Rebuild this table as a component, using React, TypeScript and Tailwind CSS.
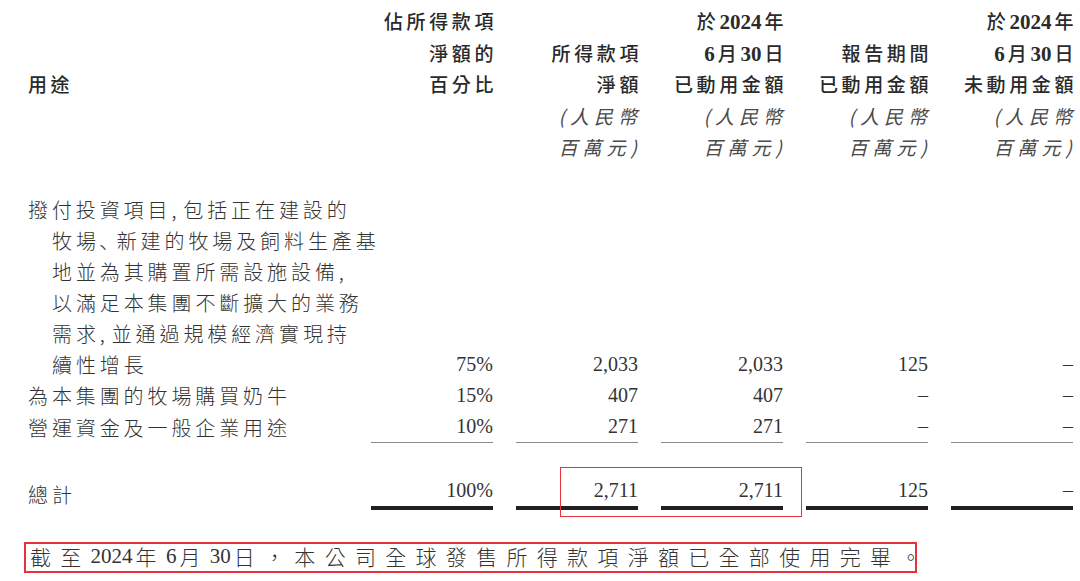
import React from "react";

const CJK_SANS = "'Noto Sans CJK TC', 'Noto Sans CJK SC', sans-serif";
const NUM = "'Liberation Serif', 'Noto Sans CJK TC', serif";

type Seg = { t: string; n?: boolean };

function HeadLine({ segs, italic }: { segs: Seg[]; italic?: boolean }) {
  return (
    <div className={`h-[31.5px] leading-[31.5px] whitespace-nowrap text-right ${italic ? "italic font-normal text-[#4a4a4a]" : "font-medium text-[#2a2a2a]"}`}>
      {segs.map((s, i) =>
        s.n ? (
          <span key={i} className="text-[21px] font-bold tracking-[0px] mr-[3px]" style={{ fontFamily: NUM }}>
            {s.t}
          </span>
        ) : (
          <span key={i} className={`text-[19px] ${italic ? "tracking-[5px]" : "tracking-[3.6px]"}`} style={{ fontFamily: CJK_SANS }}>
            {s.t}
          </span>
        )
      )}
    </div>
  );
}

const unitA: Seg[] = [{ t: "(人民幣" }];
const unitB: Seg[] = [{ t: "百萬元)" }];

const headers: { lines: (Seg[] | null)[]; units: boolean }[] = [
  { lines: [[{ t: "佔所得款項" }], [{ t: "淨額的" }], [{ t: "百分比" }]], units: false },
  { lines: [null, [{ t: "所得款項" }], [{ t: "淨額" }]], units: true },
  {
    lines: [
      [{ t: "於" }, { t: "2024", n: true }, { t: "年" }],
      [{ t: "6", n: true }, { t: "月" }, { t: "30", n: true }, { t: "日" }],
      [{ t: "已動用金額" }],
    ],
    units: true,
  },
  { lines: [null, [{ t: "報告期間" }], [{ t: "已動用金額" }]], units: true },
  {
    lines: [
      [{ t: "於" }, { t: "2024", n: true }, { t: "年" }],
      [{ t: "6", n: true }, { t: "月" }, { t: "30", n: true }, { t: "日" }],
      [{ t: "未動用金額" }],
    ],
    units: true,
  },
];

const rows = [
  {
    label: [
      "撥付投資項目,包括正在建設的",
      "牧場､新建的牧場及飼料生產基",
      "地並為其購置所需設施設備,",
      "以滿足本集團不斷擴大的業務",
      "需求,並通過規模經濟實現持",
      "續性增長",
    ],
    vals: ["75%", "2,033", "2,033", "125", "–"],
  },
  { label: ["為本集團的牧場購買奶牛"], vals: ["15%", "407", "407", "–", "–"] },
  { label: ["營運資金及一般企業用途"], vals: ["10%", "271", "271", "–", "–"] },
];

const GRID = "grid grid-cols-[320px_122px_122px_122px_122px_122px] gap-x-[23px] pl-[28px]";

function LabelLine({ text }: { text: string }) {
  const parts = text.split(/([,､])/);
  return (
    <>
      {parts.map((p, i) =>
        p === "," || p === "､" ? (
          <span key={i} className="mr-[3px]">
            {p}
          </span>
        ) : (
          <span key={i}>{p}</span>
        )
      )}
    </>
  );
}

function LabelLines({ lines }: { lines: string[] }) {
  return (
    <div className="text-[20px] leading-[31px] tracking-[3.9px] text-[#333] font-light" style={{ fontFamily: CJK_SANS }}>
      {lines.map((l, i) => (
        <div key={i} className={`whitespace-nowrap ${i > 0 ? "pl-[24px]" : ""}`}>
          <LabelLine text={l} />
        </div>
      ))}
    </div>
  );
}

function Val({ v, cls = "" }: { v: string; cls?: string }) {
  return (
    <div className={`text-right text-[20px] leading-[31px] text-[#333] ${cls}`} style={{ fontFamily: NUM }}>
      {v}
    </div>
  );
}

const note: Seg[] = [
  { t: "截至" },
  { t: "2024", n: true },
  { t: "年" },
  { t: "6", n: true },
  { t: "月" },
  { t: "30", n: true },
  { t: "日，本公司全球發售所得款項淨額已全部使用完畢。" },
];

export default function App() {
  return (
    <div className="relative w-[1080px] h-[581px] bg-white overflow-hidden">
      {/* header */}
      <div className={`${GRID} pt-[5px]`}>
        <div>
          <div className="h-[31.5px]" />
          <div className="h-[31.5px]" />
          <div className="h-[31.5px] leading-[31.5px] text-[19px] tracking-[3.6px] font-medium text-[#2a2a2a]" style={{ fontFamily: CJK_SANS }}>
            用途
          </div>
        </div>
        {headers.map((h, i) => (
          <div key={i} className="-mr-[4px]">
            {h.lines.map((l, j) => (l ? <HeadLine key={j} segs={l} /> : <div key={j} className="h-[31.5px]" />))}
            {h.units && (
              <>
                <HeadLine segs={unitA} italic />
                <HeadLine segs={unitB} italic />
              </>
            )}
          </div>
        ))}
      </div>

      {/* body rows */}
      <div className={`${GRID} mt-[31px] items-end`}>
        {rows.map((r, i) => (
          <React.Fragment key={i}>
            <LabelLines lines={r.label} />
            {r.vals.map((v, j) => (
              <Val key={j} v={v} cls={i === rows.length - 1 ? "border-b-[1.5px] border-[#8a8a8a]" : ""} />
            ))}
          </React.Fragment>
        ))}
      </div>

      {/* total */}
      <div className={`${GRID} mt-[32px] items-end`}>
        <div className="text-[20px] leading-[31px] tracking-[3.9px] text-[#333] font-light" style={{ fontFamily: CJK_SANS }}>
          總計
        </div>
        {["100%", "2,711", "2,711", "125", "–"].map((v, j) => (
          <Val key={j} v={v} cls="border-b-4 border-[#231f20]" />
        ))}
      </div>

      {/* note */}
      <div className="mt-[32px] ml-[24px] w-[893px] h-[31px] border-2 border-[#e5323c] flex items-center pl-[4px] whitespace-nowrap text-[#333]">
        {note.map((s, i) =>
          s.n ? (
            <span key={i} className="text-[21px] mr-[3px]" style={{ fontFamily: NUM }}>
              {s.t}
            </span>
          ) : (
            <span key={i} className="text-[21px] tracking-[9.3px] font-light" style={{ fontFamily: CJK_SANS }}>
              {s.t}
            </span>
          )
        )}
      </div>

      {/* red highlight around totals */}
      <div className="absolute left-[560px] top-[467px] w-[242px] h-[50px] border-[1.5px] border-[#e5323c] pointer-events-none" />
    </div>
  );
}
